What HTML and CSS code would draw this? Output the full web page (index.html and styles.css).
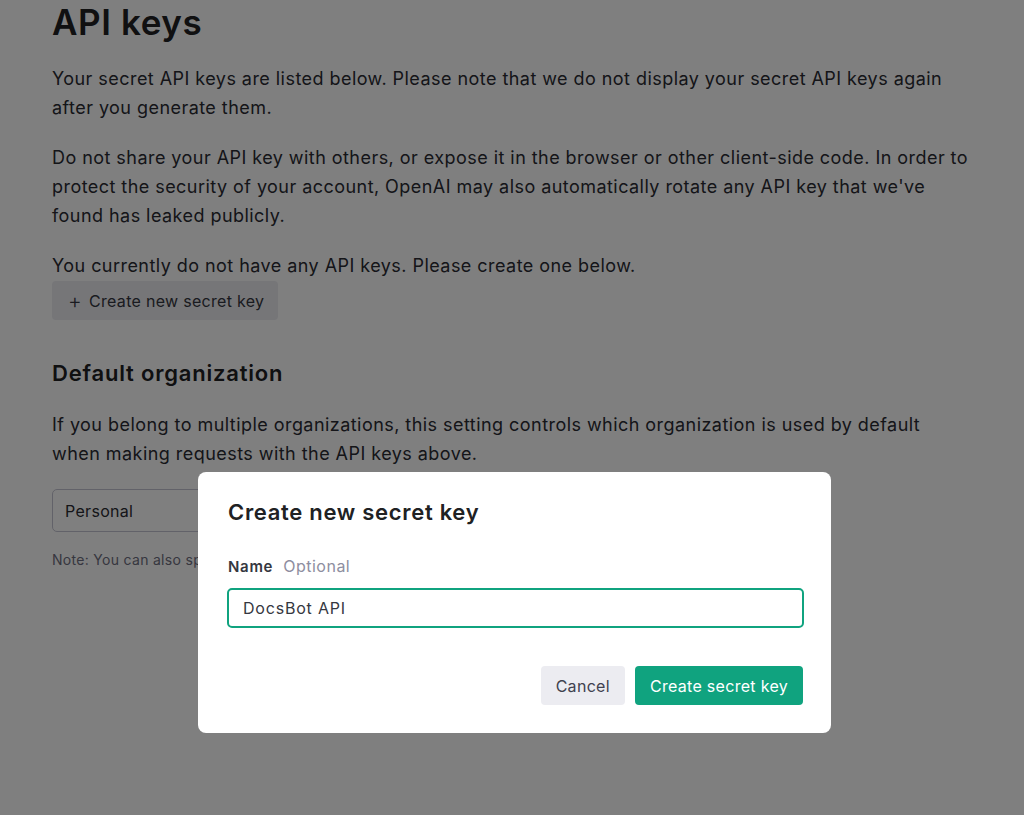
FILE: index.html
```html
<!DOCTYPE html>
<html lang="en">
<head>
    <meta charset="UTF-8">
    <meta name="viewport" content="width=device-width, initial-scale=1.0">
    <title>API keys</title>
    <link rel="stylesheet" href="styles.css">
</head>
<body>
    <div class="page">
        <h1>API keys</h1>
        <p>Your secret API keys are listed below. Please note that we do not display your secret API keys again after you generate them.</p>
        <p>Do not share your API key with others, or expose it in the browser or other client-side code. In order to protect the security of your account, OpenAI may also automatically rotate any API key that we've found has leaked publicly.</p>
        <p class="empty">You currently do not have any API keys. Please create one below.</p>
        <button class="btn-new"><span class="plus">+</span> Create new secret key</button>

        <h2>Default organization</h2>
        <p>If you belong to multiple organizations, this setting controls which organization is used by default when making requests with the API keys above.</p>
        <div class="select">Personal</div>
        <p class="note">Note: You can also specify which organization to use for each API request. See Authentication to learn more.</p>
    </div>

    <div class="overlay">
        <div class="modal">
            <h3>Create new secret key</h3>
            <div class="field-label">
                <span class="label-name">Name</span>
                <span class="optional">Optional</span>
            </div>
            <input type="text" class="name-input" value="DocsBot API">
            <div class="actions">
                <button class="btn-cancel">Cancel</button>
                <button class="btn-create">Create secret key</button>
            </div>
        </div>
    </div>
</body>
</html>
```

FILE: styles.css
```css
* {
    box-sizing: border-box;
}
body {
    margin: 0;
    font-family: Inter, "Noto Sans", sans-serif;
    color: #2a2b32;
    background-color: #fff;
}
.page {
    padding: 0 0 0 52px;
    width: 970px;
}
h1 {
    font-size: 35px;
    font-weight: 600;
    letter-spacing: 0.6px;
    line-height: 44px;
    margin: 0 0 20px;
    color: #202123;
}
p {
    font-size: 18px;
    letter-spacing: 0.45px;
    line-height: 29px;
    margin: 0 0 21px;
}
p.empty {
    margin-bottom: 1px;
}
.btn-new {
    font-family: inherit;
    font-size: 16px;
    letter-spacing: 0.3px;
    color: #353740;
    background-color: #ececf1;
    border: none;
    border-radius: 4px;
    height: 39px;
    padding: 0 14px 0 16px;
    display: flex;
    align-items: center;
    gap: 7px;
}
.plus {
    font-size: 21px;
    font-weight: 300;
    line-height: 1;
}
h2 {
    font-size: 22px;
    font-weight: 600;
    letter-spacing: 0.8px;
    color: #202123;
    margin: 40px 0 24px;
}
.select {
    width: 420px;
    height: 43px;
    border: 1px solid #c5c5d2;
    border-radius: 5px;
    padding: 0 12px;
    display: flex;
    align-items: center;
    font-size: 16px;
    letter-spacing: 0.3px;
    margin-top: 19px;
}
p.note {
    font-size: 14px;
    letter-spacing: 0.3px;
    line-height: 20px;
    margin-top: 18px;
    color: #6e6e80;
}

/* modal */
.overlay {
    position: fixed;
    inset: 0;
    background-color: rgba(0, 0, 0, 0.5);
    display: flex;
    justify-content: center;
    align-items: flex-start;
    padding-top: 472px;
    padding-left: 5px;
}
.modal {
    width: 633px;
    background-color: #fff;
    border-radius: 8px;
    padding: 24px 28px 28px 30px;
}
h3 {
    font-size: 22px;
    font-weight: 600;
    letter-spacing: 0.7px;
    color: #202123;
    margin: 0 0 27px;
    line-height: 32px;
}
.field-label {
    display: flex;
    align-items: baseline;
    gap: 10px;
    line-height: 22px;
    margin-bottom: 10px;
}
.label-name {
    font-size: 15px;
    font-weight: 600;
    letter-spacing: 0.7px;
    color: #353740;
}
.optional {
    font-size: 16px;
    letter-spacing: 0.5px;
    color: #8e8ea0;
}
.name-input {
    display: block;
    width: 577px;
    height: 40px;
    margin-left: -1px;
    border: 2px solid #10a37f;
    border-radius: 5px;
    padding: 0 14px;
    font-family: inherit;
    font-size: 16px;
    letter-spacing: 0.8px;
    color: #353740;
    outline: none;
}
.actions {
    display: flex;
    justify-content: flex-end;
    gap: 10px;
    margin-top: 38px;
}
.actions button {
    font-family: inherit;
    font-size: 16px;
    letter-spacing: 0.3px;
    height: 39px;
    border: none;
    border-radius: 4px;
    padding: 0 15px;
}
.btn-cancel {
    background-color: #ececf1;
    color: #40414f;
    padding: 0 16px;
}
.btn-create {
    background-color: #10a37f;
    color: #fff;
    letter-spacing: 0.2px;
}
```
